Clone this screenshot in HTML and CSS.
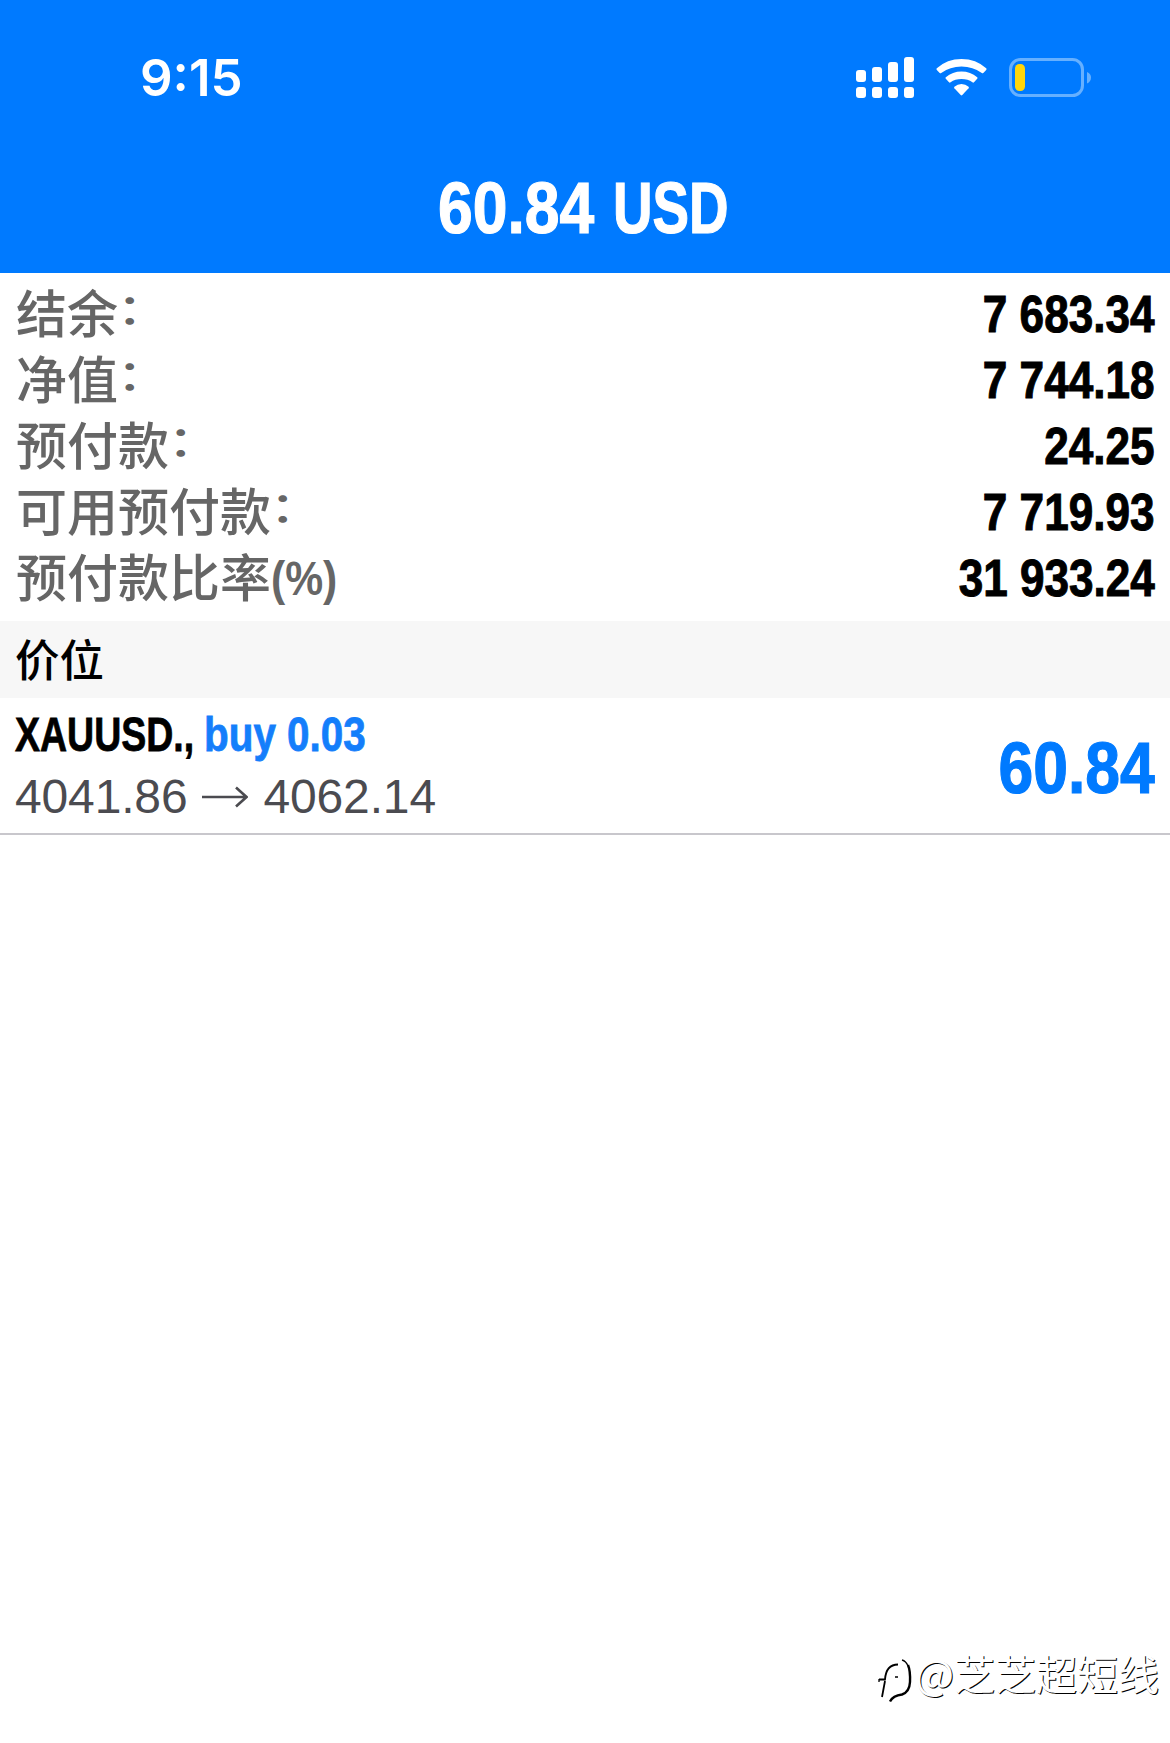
FILE: index.html
```html
<!DOCTYPE html>
<html lang="zh-CN">
<head>
<meta charset="utf-8">
<title>60.84 USD</title>
<link rel="stylesheet" href="styles.css">
</head>
<body>
<header class="top">
  <div class="status">
    <span class="time">9:15</span>
    <svg class="icons" width="240" height="50" viewBox="0 0 240 50">
      <g fill="#fff">
        <rect x="1" y="15" width="10" height="12" rx="3"/>
        <rect x="17" y="12" width="10" height="15" rx="3"/>
        <rect x="33" y="7" width="10" height="20" rx="3"/>
        <rect x="49" y="2" width="10" height="25" rx="3"/>
        <rect x="1" y="32" width="10" height="11" rx="3"/>
        <rect x="17" y="32" width="10" height="11" rx="3"/>
        <rect x="33" y="32" width="10" height="11" rx="3"/>
        <rect x="49" y="32" width="10" height="11" rx="3"/>
        <path d="M106.500 4Q121 4 131.200 13.300Q132 14 131.200 14.900L128.300 18Q127.600 18.600 126.800 18Q118 11.500 106.500 11.500Q95 11.500 86.200 18Q85.400 18.600 84.700 18L81.800 14.900Q81 14 81.800 13.300Q92 4 106.500 4Z"/>
        <path d="M106.500 16.500Q115.500 16.500 122.200 22.200Q123 23 122.200 23.800L119 27.300Q118.200 28 117.400 27.300Q113 24 106.500 24Q100 24 95.600 27.300Q94.800 28 94 27.300L90.800 23.800Q90 23 90.800 22.200Q97.500 16.500 106.500 16.500Z"/>
        <path d="M106.500 29Q110.500 29 113.600 31.800Q114.300 32.500 113.600 33.300L107.300 40Q106.500 40.800 105.700 40L99.400 33.300Q98.700 32.500 99.400 31.800Q102.500 29 106.500 29Z"/>
      </g>
      <rect x="155.500" y="4.500" width="72" height="36" rx="10" fill="none" stroke="#66b0ff" stroke-width="3"/>
      <rect x="160" y="9" width="10" height="27" rx="4.500" fill="#ffd60a"/>
      <path d="M232 17Q236 18.500 236 22.500Q236 26.500 232 28.500Z" fill="#66b0ff"/>
    </svg>
  </div>
  <h1 class="total"><span class="sum">60.84</span><span class="cur">USD</span></h1>
</header>
<main>
  <dl class="account">
    <div class="row"><dt>结余<span class="colon">：</span></dt><dd>7 683.34</dd></div>
    <div class="row"><dt>净值<span class="colon">：</span></dt><dd>7 744.18</dd></div>
    <div class="row"><dt>预付款<span class="colon">：</span></dt><dd>24.25</dd></div>
    <div class="row"><dt>可用预付款<span class="colon">：</span></dt><dd>7 719.93</dd></div>
    <div class="row"><dt>预付款比率<span class="pct">(%)</span></dt><dd>31 933.24</dd></div>
  </dl>
  <h2 class="section">价位</h2>
  <section class="position">
    <div class="deal">
      <div class="order"><span class="symbol">XAUUSD.,</span><span class="side">buy 0.03</span></div>
      <div class="prices">
        <span>4041.86</span>
        <svg width="46" height="22" viewBox="0 0 46 22" fill="none" stroke="#4b4b50" stroke-width="2.600"><path d="M0 11H44M34 1.500L44.500 11L34 20.500"/></svg>
        <span>4062.14</span>
      </div>
    </div>
    <span class="profit">60.84</span>
  </section>
</main>
<footer class="mark">
  <svg width="36" height="46" viewBox="0 0 36 46" fill="none" stroke="#000">
    <path stroke-width="1.800" d="M1 22.500H7Q8 7.500 20 7.500M7 24L4 40"/>
    <path stroke-width="1.300" d="M1 25V22M24 3Q28 4 30 9M17 20H20"/>
    <path stroke-width="2.400" d="M30 8Q32.500 14 32 25Q31.500 35 24 37.500Q15 38.500 12 44.500"/>
  </svg>
  <span>@芝芝超短线</span>
</footer>
</body>
</html>
```
FILE: styles.css
```css
* { box-sizing: border-box; margin: 0; padding: 0; }
body {
  width: 1170px;
  height: 1743px;
  display: flex;
  flex-direction: column;
  background: #fff;
  color: #000;
  font-family: "Liberation Sans", "Noto Sans CJK SC", sans-serif;
  white-space: nowrap;
  overflow: hidden;
}
.top { height: 273px; background: #007aff; color: #fff; }
.status {
  height: 155px;
  padding: 0 75px 0 140px;
  display: flex;
  align-items: center;
  justify-content: space-between;
}
.time { font: 600 51px/62px Inter, sans-serif; }
.icons { margin-top: 4px; }
.total {
  height: 106px;
  padding-left: 438px;
  display: flex;
  align-items: center;
  font-size: 73px;
  line-height: 106px;
  -webkit-text-stroke: 1.2px currentColor;
}
.sum { width: 175px; transform: scaleX(.855); transform-origin: left; }
.cur { transform: scaleX(.75); transform-origin: left; }
.account { height: 348px; padding: 7px 15px 0 16px; }
.row { height: 66px; display: flex; justify-content: space-between; align-items: center; }
dt {
  display: flex;
  height: 66px;
  margin-top: -5px;
  font: 500 51px/66px "Noto Sans CJK SC", sans-serif;
  color: #666;
}
.colon { transform: translate(-1px, -5px) scaleY(.8); }
.pct {
  padding-top: 3px;
  transform: scaleX(.87);
  transform-origin: left;
  font: bold 49px/66px "Liberation Sans", sans-serif;
}
dd {
  padding-top: 3px;
  font-weight: bold;
  font-size: 51px;
  line-height: 66px;
  transform: scaleX(.865);
  transform-origin: right;
  -webkit-text-stroke: 1px currentColor;
}
.section {
  height: 77px;
  padding-left: 15px;
  background: #f7f7f7;
  font: 500 44.5px/74px "Noto Sans CJK SC", sans-serif;
}
.position {
  height: 137px;
  padding: 0 15px 0 15px;
  display: flex;
  justify-content: space-between;
  align-items: center;
  border-bottom: 2px solid #c8c7cc;
}
.deal { display: flex; flex-direction: column; }
.order {
  display: flex;
  height: 63px;
  font-weight: bold;
  font-size: 49px;
  line-height: 60px;
  -webkit-text-stroke: .8px currentColor;
}
.symbol { width: 189px; transform: scaleX(.765); transform-origin: left; }
.side { color: #147efb; transform: scaleX(.825); transform-origin: left; }
.prices {
  display: flex;
  align-items: center;
  gap: 15px;
  font-size: 48px;
  line-height: 60px;
  letter-spacing: -.15px;
  color: #4b4b50;
}
.profit {
  padding-top: 4px;
  color: #007aff;
  font-weight: bold;
  font-size: 73px;
  transform: scaleX(.855);
  transform-origin: right;
  -webkit-text-stroke: 1.2px currentColor;
}
.mark {
  margin-top: auto;
  height: 106px;
  padding: 10px 11px 0 0;
  display: flex;
  justify-content: flex-end;
  align-items: flex-start;
  gap: 1px;
  color: #fff;
  font: 400 41px/50px "Noto Sans CJK SC", sans-serif;
  text-shadow: 1px 1px 0 #000;
}
.mark svg { margin-top: 10px; }
```
